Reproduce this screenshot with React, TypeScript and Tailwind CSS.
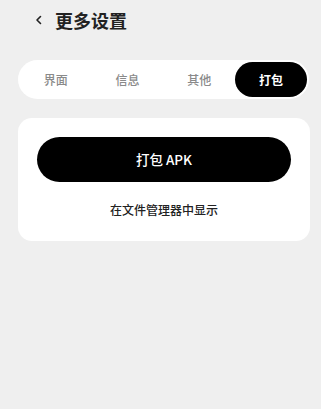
const tabs = ['界面', '信息', '其他', '打包'];

function ChevronLeft() {
  return (
    <svg width="8" height="10" viewBox="0 0 8 10" fill="none" className="shrink-0">
      <path d="M5.5 1.5 L2 5 L5.5 8.5" stroke="#222" strokeWidth="1.6" strokeLinecap="round" strokeLinejoin="round" />
    </svg>
  );
}

export default function App() {
  const active = 3;

  return (
    <div
      className="min-h-[409px] w-full bg-[#efefef]"
      style={{ fontFamily: '"Noto Sans CJK SC", "Noto Sans", sans-serif' }}
    >
      <header className="flex h-[40px] items-center gap-[12px] pl-[35px]">
        <ChevronLeft />
        <h1 className="text-[18px] leading-[22px] font-bold text-[#222]">更多设置</h1>
      </header>

      <div className="ml-[18px] mt-[20px] grid h-[39px] w-[291px] grid-cols-4 rounded-full bg-white p-[2px]">
        {tabs.map((tab, i) => (
          <button
            key={tab}
            className={
              i === active
                ? 'flex items-center justify-center rounded-full bg-black text-[12px] font-bold text-white'
                : 'flex items-center justify-center rounded-full text-[12px] font-medium text-[#8a8a8a]'
            }
          >
            {tab}
          </button>
        ))}
      </div>

      <div className="ml-[18px] mt-[19px] w-[292px] rounded-[14px] bg-white px-[19px] pb-[22px] pt-[19px]">
        <button className="flex h-[45px] w-full items-center justify-center rounded-full bg-black text-[13.5px] font-medium text-white">
          打包 APK
        </button>
        <p className="mt-[19px] text-center text-[12px] leading-[18px] font-medium text-[#222]">
          在文件管理器中显示
        </p>
      </div>
    </div>
  );
}
